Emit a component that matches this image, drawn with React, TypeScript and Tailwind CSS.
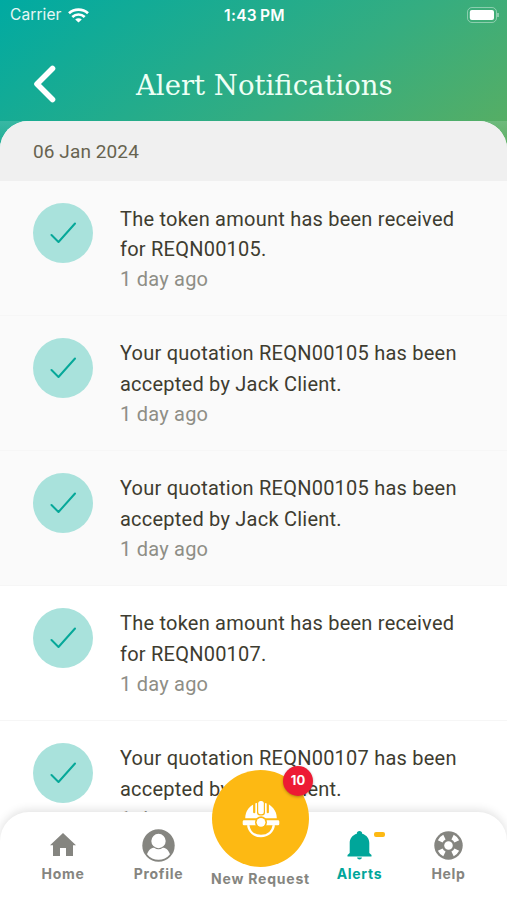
import React from "react";

type Notice = { text: [string, string]; time: string; read: boolean };

const received = (id: string): [string, string] => ["The token amount has been received", `for ${id}.`];
const accepted = (id: string): [string, string] => [`Your quotation ${id} has been`, "accepted by Jack Client."];

const notices: Notice[] = [
  { text: received("REQN00105"), time: "1 day ago", read: true },
  { text: accepted("REQN00105"), time: "1 day ago", read: true },
  { text: accepted("REQN00105"), time: "1 day ago", read: true },
  { text: received("REQN00107"), time: "1 day ago", read: false },
  { text: accepted("REQN00107"), time: "1 day ago", read: false },
];

function StatusBar() {
  return (
    <div className="grid h-[30px] grid-cols-3 items-center pr-2 pl-[10px] font-[Inter,sans-serif] text-white">
      <div className="flex items-center gap-[6px]">
        <span className="text-[15.5px] leading-5 tracking-[0.1px] text-white/90">Carrier</span>
        <svg className="h-[15px] w-[21px]" viewBox="0 0 21 15" fill="none" stroke="currentColor" strokeWidth="2.7">
          <path d="M1 5.3C6.3.4 14.7.4 20 5.3" />
          <path d="M4.3 8.9c3.5-3.2 8.9-3.2 12.4 0" />
          <path d="M10.5 14.6 7.2 11.5c1.9-1.6 4.7-1.6 6.6 0Z" fill="currentColor" stroke="none" />
        </svg>
      </div>
      <div className="pt-px text-center text-[15.5px] leading-5 font-semibold tracking-[0.3px] whitespace-nowrap">1:43<span className="ml-[3px]">PM</span></div>
      <svg className="h-4 w-8 justify-self-end" viewBox="0 0 32 16" fill="none">
        <rect x=".5" y=".5" width="29" height="15" rx="4.5" stroke="white" strokeOpacity=".4" />
        <rect x="2.8" y="3" width="24.2" height="10" rx="2" fill="white" />
        <path d="M31 6v4" stroke="white" strokeOpacity=".5" strokeWidth="1.5" />
      </svg>
    </div>
  );
}

function NoticeRow({ item }: { item: Notice }) {
  return (
    <li className={`flex h-[134.9px] shrink-0 border-b border-[#f6f6f6] pt-[22px] pl-[33px] ${item.read ? "bg-[#fafafa]" : "bg-white"}`}>
      <div className="flex size-[60px] shrink-0 items-center justify-center rounded-full bg-[#a9e2dc]">
        <svg className="h-[22px] w-[26px]" viewBox="0 0 26 22" fill="none" stroke="#06a899" strokeWidth="2" strokeLinecap="round" strokeLinejoin="round">
          <path d="m1.5 13 7 7L25 1.5" />
        </svg>
      </div>
      <div className="ml-[27px] pt-[0.6px] text-[20px] leading-[30.4px] tracking-[0.23px] whitespace-nowrap text-[#3e3c30]">
        <p>{item.text[0]}</p>
        <p>{item.text[1]}</p>
        <p className="text-[#8e8e86]">{item.time}</p>
      </div>
    </li>
  );
}

function HomeIcon() {
  return (
    <svg className="h-[25px] w-[26px]" viewBox="0 0 26 25" fill="currentColor">
      <path d="M13 0 26 12.3h-3V23h-7v-8h-6v8H3V12.3H0Z" />
    </svg>
  );
}

function ProfileIcon() {
  return (
    <svg className="size-[33px]" viewBox="0 0 33 33">
      <circle cx="16.5" cy="16.5" r="16.2" fill="currentColor" />
      <circle cx="16.5" cy="12" r="7.2" fill="white" />
      <path d="M5 25.3c1.2-4 4-6.6 7.2-6.6 2.8 2 5.8 2 8.6 0 3.2 0 6 2.6 7.2 6.6-5.8 7.4-17.2 7.4-23 0Z" fill="white" />
    </svg>
  );
}

function BellIcon() {
  return (
    <svg className="h-[29px] w-[25px]" viewBox="0 0 25 29" fill="currentColor">
      <path d="M12.5 0c1.6 0 2.7 1.1 2.7 2.7 4.4 1.3 7.1 4.9 7.1 9.4V22l2.2 2v1.5H.5V24l2.2-2v-9.9c0-4.5 2.7-8.1 7.1-9.4C9.8 1.1 10.9 0 12.5 0ZM10 26.6h5c-.3 1.3-1.2 2-2.5 2s-2.2-.7-2.5-2Z" />
    </svg>
  );
}

function HelpIcon() {
  return (
    <svg className="size-[29px]" viewBox="0 0 30 30" fill="none">
      <circle cx="15" cy="15" r="14.7" fill="currentColor" />
      <g stroke="white" strokeWidth="5.4">
        <path d="M19.2 6.4A9.6 9.6 0 0 1 23.6 10.8" />
        <path d="M23.6 19.2A9.6 9.6 0 0 1 19.2 23.6" />
        <path d="M10.8 23.6A9.6 9.6 0 0 1 6.4 19.2" />
        <path d="M6.4 10.8A9.6 9.6 0 0 1 10.8 6.4" />
      </g>
      <circle cx="15" cy="15" r="4.4" fill="white" />
    </svg>
  );
}

function HelmetIcon() {
  return (
    <svg className="h-[38px] w-[38px]" viewBox="0 0 38 38">
      <path d="M3.2 18.3C3.3 10.2 8.7 4.2 16 2.8h6c7.3 1.4 12.7 7.4 12.8 15.5Z" fill="white" />
      <path d="M12.2 4v8.2M25.8 4v8.2" stroke="#fdb913" strokeWidth="2.2" strokeLinecap="round" />
      <rect x="15" y="0" width="8" height="15.5" rx="3" fill="#fdb913" />
      <rect x="16.2" y="1" width="5.6" height="13.2" rx="2.5" fill="white" />
      <path d="M2 20.2h34a1.3 1.3 0 0 1 1.3 1.3V24a1.3 1.3 0 0 1-1.3 1.3H2A1.3 1.3 0 0 1 .7 24v-2.5A1.3 1.3 0 0 1 2 20.2Z" fill="white" />
      <path d="M6.2 25.2C7.2 32 12.2 36 19 36s11.8-4 12.8-10.8" fill="none" stroke="white" strokeWidth="2.4" />
      <circle cx="19" cy="22.3" r="6" fill="#fdb913" />
      <circle cx="19" cy="22.3" r="4.4" fill="white" />
    </svg>
  );
}

function NavItem({ label, icon, className = "" }: { label: string; icon: React.ReactNode; className?: string }) {
  return (
    <div className={`flex flex-col items-center ${className}`}>
      <div className="flex h-[35px] items-center">{icon}</div>
      <span className="mt-px pt-px text-[14px] leading-[18px] font-bold tracking-[0.7px] whitespace-nowrap">{label}</span>
    </div>
  );
}

function BottomNav() {
  return (
    <nav className="absolute inset-x-0 bottom-0 grid h-[88px] grid-cols-[26px_74px_117px_87px_111px_67px_25px] rounded-t-[29px] bg-white pt-4 font-[Inter,sans-serif] text-[#858580] shadow-[0_-2px_10px_rgba(0,0,0,0.12)]">
      <NavItem className="col-start-2" label="Home" icon={<HomeIcon />} />
      <NavItem className="col-start-3" label="Profile" icon={<ProfileIcon />} />
      <div className="relative -mt-[58px] flex flex-col items-center">
        <button className="flex size-[97px] shrink-0 items-center justify-center rounded-full bg-[#fdb913]">
          <HelmetIcon />
        </button>
        <span className="absolute -top-[4px] left-[66px] flex size-[30px] items-center justify-center rounded-full bg-[#ed1b34] text-[13px] font-bold text-white shadow-[0_1px_3px_rgba(0,0,0,0.3)]">10</span>
        <span className="mt-[3px] text-[14px] leading-[18px] font-bold tracking-[0.8px] whitespace-nowrap">New Request</span>
      </div>
      <div className="relative text-[#00a69a]">
        <NavItem label="Alerts" icon={<BellIcon />} />
        <span className="absolute top-[4px] left-[70px] h-[5px] w-[11px] rounded-[2px] bg-[#fdb913]" />
      </div>
      <NavItem className="col-start-6" label="Help" icon={<HelpIcon />} />
    </nav>
  );
}

export default function App() {
  return (
    <main className="relative flex h-[900px] w-[507px] flex-col overflow-hidden bg-white font-[Roboto,sans-serif]">
      <header className="h-[150px] shrink-0 bg-[linear-gradient(145deg,#00aaa2_0%,#35ad80_60%,#5bae60_100%)]">
        <StatusBar />
        <div className="flex h-[91px] items-center pt-[16px] pl-[33px]">
          <svg className="h-[38px] w-[23px]" viewBox="0 0 23 38" fill="none" stroke="white" strokeWidth="5.6" strokeLinecap="round" strokeLinejoin="round">
            <path d="M19.5 3.5 4 19l15.5 15.5" />
          </svg>
          <h1 className="mt-[2px] ml-[80px] font-['DejaVu_Serif',serif] text-[27.5px] leading-9 whitespace-nowrap text-[#eefff5]">Alert Notifications</h1>
        </div>
        <div className="h-[29px] bg-linear-to-b from-white/15 to-white/0" />
      </header>
      <section className="-mt-[29px] flex-1 overflow-hidden rounded-t-[28px] bg-[#fafafa]">
        <h2 className="h-[60px] bg-[#f0f0f0] pl-[33px] text-[19px] leading-[61px] tracking-[0.1px] text-[#67634f]">06 Jan 2024</h2>
        <ul>
          {notices.map((item, index) => <NoticeRow key={index} item={item} />)}
        </ul>
      </section>
      <BottomNav />
    </main>
  );
}
